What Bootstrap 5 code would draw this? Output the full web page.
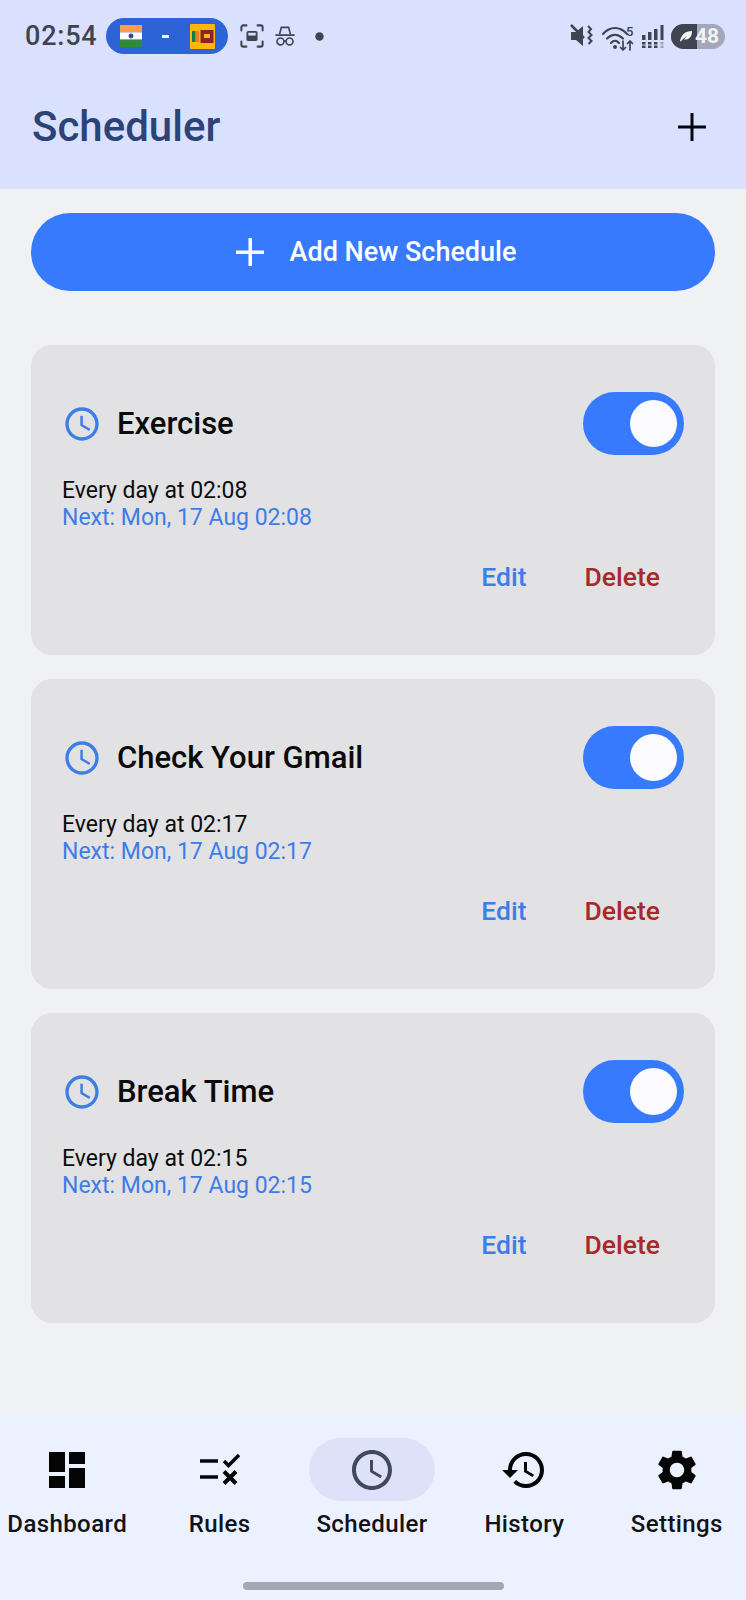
<!DOCTYPE html>
<html lang="en">
<head>
  <meta charset="UTF-8">
  <meta name="viewport" content="width=device-width, initial-scale=1">
  <title>Scheduler</title>
  <link href="https://cdn.jsdelivr.net/npm/bootstrap@5.3.0/dist/css/bootstrap.min.css" rel="stylesheet">
  <style>
    html, body { height: 100%; }
    body { font-family: Roboto, "Liberation Sans", sans-serif; background: #f0f1f3; overflow: hidden; }
    .app-shell { width: 746px; height: 1600px; }
    .top-area { background: #d9e1ff; height: 189px; }
    .status-row { height: 72px; padding: 0 21px 0 25px; color: #3f4451; }
    .status-time { font-size: 27px; font-weight: 500; line-height: 1; letter-spacing: .8px; }
    .score-pill { width: 122px; height: 36px; background: #2c63d6; border-radius: 18px; margin-left: 8px; padding: 0 13px 0 14px; }
    .score-dash { width: 7px; height: 3px; background: #f3f6ff; }
    .st-shot { margin-left: 12px; }
    .st-hat { margin-left: 11px; }
    .st-dot { margin-left: 20px; }
    .st-gap { margin-left: 7px; }
    .title-row { padding: 0 40px 0 32px; height: 110px; }
    .page-title { font-size: 42px; font-weight: 500; color: #2d4375; margin: 0; line-height: 1; }
    .add-pill { background: #387afe; color: #fff; height: 78px; border-radius: 39px; font-size: 27px; font-weight: 500; border: 0; margin: 24px 31px 0; width: 684px; padding-left: 18px; }
    .add-pill:hover, .add-pill:active { background: #387afe !important; color: #fff !important; }
    .add-plus { margin-right: 26px; }
    .sched-list { margin: 54px 31px 0; gap: 24px; }
    .sched-item { background: #e2e2e5; border-radius: 21px; height: 310px; padding: 47px 31px 0 31px; }
    .sched-name { font-size: 31px; font-weight: 500; color: #0a0a0a; margin: 0 0 0 15px; line-height: 60px; }
    .sched-when { font-size: 23px; line-height: 26px; color: #0c0c0c; margin-top: 23px; }
    .sched-next { font-size: 23px; line-height: 27px; color: #3d7de6; }
    .toggle-track { width: 101px; height: 63px; border-radius: 32px; background: #387afe; padding: 8px 7px; }
    .toggle-knob { width: 47px; height: 47px; border-radius: 50%; background: #fbfbff; }
    .act-row { margin-top: 31px; padding-right: 24px; gap: 58px; }
    .act-link { font-size: 26.5px; font-weight: 500; line-height: 30px; text-decoration: none; }
    .act-edit { color: #3d7de6; }
    .act-del { color: #a8292a; }
    .tab-bar { background: #ecf1ff; height: 186px; }
    .tab-row { margin: 24px -7px 0 -9px; }
    .tab-col { flex: 1 1 0; min-width: 0; }
    .tab-pill { width: 126px; height: 63px; border-radius: 32px; }
    .tab-pill.is-on { background: #dde2f9; }
    .tab-label { font-size: 24px; font-weight: 500; letter-spacing: .4px; color: #111318; line-height: 28px; margin-top: 9px; white-space: nowrap; }
    .home-bar { width: 261px; height: 8px; border-radius: 4px; background: #a3a7b2; margin: 44px auto 0; }
    .batt { width: 54px; height: 25px; border-radius: 13px; background: #a3a8b9; color: #f1f2f6; font-size: 21px; font-weight: 700; line-height: 25px; overflow: hidden; }
    .batt-fill { width: 26px; height: 25px; background: #3f4451; }
    .batt-num { margin-left: -2px; }
  </style>
</head>
<body>
  <div class="app-shell d-flex flex-column">

    <!-- Header -->
    <div class="top-area">
      <div class="status-row d-flex align-items-center">
        <span class="status-time">02:54</span>
        <div class="score-pill d-flex align-items-center justify-content-between">
          <svg width="22" height="22" viewBox="0 0 23 23"><rect width="23" height="7.700" fill="#ff9d47"/><rect y="7.700" width="23" height="7.600" fill="#fff"/><rect y="15.300" width="23" height="7.700" fill="#2f8a3b"/><circle cx="11.500" cy="11.500" r="2.600" fill="#3a4a9a"/></svg>
          <span class="score-dash"></span>
          <svg width="25" height="25" viewBox="0 0 25 25"><rect width="25" height="25" rx="1" fill="#ffb70a"/><rect x="2" y="7" width="3.500" height="11" fill="#0f7a4a"/><rect x="5.500" y="7" width="3.500" height="11" fill="#f07c1c"/><rect x="10.500" y="6" width="13" height="13" fill="#8c2229"/><rect x="14" y="10" width="6" height="4" fill="#ffb70a"/></svg>
        </div>
        <svg class="st-shot" width="24" height="24" viewBox="0 0 26 26" fill="none" stroke="#3f4451" stroke-width="2.200" stroke-linecap="round"><path d="M1.500 7V3.500a2 2 0 0 1 2-2H7M19 1.500h3.500a2 2 0 0 1 2 2V7M24.500 19v3.500a2 2 0 0 1-2 2H19M7 24.500H3.500a2 2 0 0 1-2-2V19"/><rect x="7" y="7.500" width="12" height="11" rx="2" fill="#3f4451" stroke="none"/><rect x="9" y="9.500" width="8" height="3" fill="#d9e1ff" stroke="none"/></svg>
        <svg class="st-hat" width="20" height="20" viewBox="0 0 22 22" fill="none" stroke="#3f4451" stroke-width="1.800"><path d="M5 9 7 1.500h8l2 7.500"/><path d="M1 10h20" stroke-linecap="round"/><circle cx="6" cy="17" r="3.800"/><circle cx="16" cy="17" r="3.800"/><path d="M9.800 16.500h2.400"/></svg>
        <svg class="st-dot" width="9" height="9" viewBox="0 0 9 9"><circle cx="4.500" cy="4.500" r="4.200" fill="#3f4451"/></svg>
        <div class="ms-auto d-flex align-items-center">
          <svg width="25" height="24" viewBox="0 0 25 24" fill="#3f4451"><path d="M1 8h5l7-6v20l-7-6H1z"/><path d="M1 1l13 13" stroke="#3f4451" stroke-width="2.500"/><path d="M18 2l3 3-2.500 3 3 3-3 3 3 3-3 3" fill="none" stroke="#3f4451" stroke-width="2"/></svg>
          <svg class="st-gap" width="33" height="29" viewBox="0 -4 33 29" fill="none" stroke="#3f4451" stroke-width="2.200" stroke-linecap="round"><path d="M1 8c7-8 17-8 24 0"/><path d="M5 12.500c5-5 11-5 16 0"/><path d="M9 17c3-3 5-3 8 0"/><circle cx="13" cy="21" r="2" fill="#3f4451" stroke="none"/><path d="M21 15v9m-2.500-2.500 2.500 2.500 2.500-2.500M28 24v-9m-2.500 2.500L28 15l2.500 2.500" stroke-width="1.700"/><text x="24" y="10" font-size="13" font-weight="500" font-family="Roboto" fill="#3f4451" stroke="none">5</text></svg>
          <svg class="st-gap" width="22" height="23" viewBox="0 0 22 23" fill="#3f4451"><rect x="0" y="10" width="3.500" height="5"/><rect x="6" y="7" width="3.500" height="8"/><rect x="12" y="4" width="3.500" height="11"/><rect x="18.500" y="0" width="3" height="15"/><rect y="17" width="3.500" height="2.500"/><rect x="6" y="17" width="3.500" height="2.500"/><rect x="12" y="17" width="3.500" height="2.500"/><rect x="18.500" y="17" width="3" height="2.500" opacity=".4"/><rect y="20.500" width="3.500" height="2.500"/><rect x="6" y="20.500" width="3.500" height="2.500"/><rect x="12" y="20.500" width="3.500" height="2.500"/><rect x="18.500" y="20.500" width="3" height="2.500" opacity=".4"/></svg>
          <div class="batt d-flex st-gap">
            <div class="batt-fill d-flex align-items-center justify-content-center">
              <svg class="ms-1" width="14" height="12" viewBox="0 0 14 12" fill="#f1f2f6"><path d="M1 11C2 5 6 1 13 1c0 6-3 9-8 8.500l3-4-4.500 4L2 11.500z"/></svg>
            </div>
            <span class="batt-num">48</span>
          </div>
        </div>
      </div>
      <div class="title-row d-flex align-items-center justify-content-between">
        <h1 class="page-title">Scheduler</h1>
        <svg width="28" height="28" viewBox="0 0 28 28" fill="#05070d"><rect x="12.500" width="3" height="28"/><rect y="12.500" width="28" height="3"/></svg>
      </div>
    </div>

    <!-- Add button -->
    <button class="btn add-pill d-flex align-items-center justify-content-center" type="button">
      <svg class="add-plus" width="28" height="28" viewBox="0 0 28 28" fill="#fff"><rect x="12.500" width="3.500" height="28"/><rect y="12.500" width="28" height="3.500"/></svg>
      Add New Schedule
    </button>

    <!-- Schedule cards -->
    <div class="sched-list d-flex flex-column">
      <div class="sched-item">
        <div class="d-flex align-items-center justify-content-between">
          <div class="d-flex align-items-center">
            <svg width="40" height="40" viewBox="0 0 24 24" fill="#3d7de6"><path d="M11.990 2C6.470 2 2 6.480 2 12s4.470 10 9.990 10C17.520 22 22 17.520 22 12S17.520 2 11.990 2zM12 20c-4.420 0-8-3.580-8-8s3.580-8 8-8 8 3.580 8 8-3.580 8-8 8zm.5-13H11v6l5.250 3.150.75-1.230-4.500-2.670z"/></svg>
            <h2 class="sched-name">Exercise</h2>
          </div>
          <div class="toggle-track d-flex justify-content-end"><span class="toggle-knob"></span></div>
        </div>
        <div class="sched-when">Every day at 02:08</div>
        <div class="sched-next">Next: Mon, 17 Aug 02:08</div>
        <div class="act-row d-flex justify-content-end">
          <a class="act-link act-edit" href="#">Edit</a>
          <a class="act-link act-del" href="#">Delete</a>
        </div>
      </div>
      <div class="sched-item">
        <div class="d-flex align-items-center justify-content-between">
          <div class="d-flex align-items-center">
            <svg width="40" height="40" viewBox="0 0 24 24" fill="#3d7de6"><path d="M11.990 2C6.470 2 2 6.480 2 12s4.470 10 9.990 10C17.520 22 22 17.520 22 12S17.520 2 11.990 2zM12 20c-4.420 0-8-3.580-8-8s3.580-8 8-8 8 3.580 8 8-3.580 8-8 8zm.5-13H11v6l5.250 3.150.75-1.230-4.500-2.670z"/></svg>
            <h2 class="sched-name">Check Your Gmail</h2>
          </div>
          <div class="toggle-track d-flex justify-content-end"><span class="toggle-knob"></span></div>
        </div>
        <div class="sched-when">Every day at 02:17</div>
        <div class="sched-next">Next: Mon, 17 Aug 02:17</div>
        <div class="act-row d-flex justify-content-end">
          <a class="act-link act-edit" href="#">Edit</a>
          <a class="act-link act-del" href="#">Delete</a>
        </div>
      </div>
      <div class="sched-item">
        <div class="d-flex align-items-center justify-content-between">
          <div class="d-flex align-items-center">
            <svg width="40" height="40" viewBox="0 0 24 24" fill="#3d7de6"><path d="M11.990 2C6.470 2 2 6.480 2 12s4.470 10 9.990 10C17.520 22 22 17.520 22 12S17.520 2 11.990 2zM12 20c-4.420 0-8-3.580-8-8s3.580-8 8-8 8 3.580 8 8-3.580 8-8 8zm.5-13H11v6l5.250 3.150.75-1.230-4.500-2.670z"/></svg>
            <h2 class="sched-name">Break Time</h2>
          </div>
          <div class="toggle-track d-flex justify-content-end"><span class="toggle-knob"></span></div>
        </div>
        <div class="sched-when">Every day at 02:15</div>
        <div class="sched-next">Next: Mon, 17 Aug 02:15</div>
        <div class="act-row d-flex justify-content-end">
          <a class="act-link act-edit" href="#">Edit</a>
          <a class="act-link act-del" href="#">Delete</a>
        </div>
      </div>
    </div>

    <!-- Bottom nav -->
    <nav class="tab-bar mt-auto">
      <div class="tab-row d-flex">
        <div class="tab-col d-flex flex-column align-items-center">
          <div class="tab-pill d-flex align-items-center justify-content-center">
            <svg width="48" height="48" viewBox="0 0 24 24" fill="#050505"><path d="M3 13h8V3H3v10zm0 8h8v-6H3v6zm10 0h8V11h-8v10zm0-18v6h8V3h-8z"/></svg>
          </div>
          <div class="tab-label">Dashboard</div>
        </div>
        <div class="tab-col d-flex flex-column align-items-center">
          <div class="tab-pill d-flex align-items-center justify-content-center">
            <svg width="40" height="32" viewBox="0 0 40 32" fill="none" stroke="#050505" stroke-width="3.400"><path d="M0 7h18M0 23h18"/><path d="M24 7l4.500 4.500L39 1"/><path d="M24 17.500l12 12M36 17.500l-12 12" stroke-width="4"/></svg>
          </div>
          <div class="tab-label">Rules</div>
        </div>
        <div class="tab-col d-flex flex-column align-items-center">
          <div class="tab-pill is-on d-flex align-items-center justify-content-center">
            <svg width="48" height="48" viewBox="0 0 24 24" fill="#42495c"><path d="M11.990 2C6.470 2 2 6.480 2 12s4.470 10 9.990 10C17.520 22 22 17.520 22 12S17.520 2 11.990 2zM12 20c-4.420 0-8-3.580-8-8s3.580-8 8-8 8 3.580 8 8-3.580 8-8 8zm.5-13H11v6l5.250 3.150.75-1.230-4.500-2.670z"/></svg>
          </div>
          <div class="tab-label">Scheduler</div>
        </div>
        <div class="tab-col d-flex flex-column align-items-center">
          <div class="tab-pill d-flex align-items-center justify-content-center">
            <svg width="48" height="48" viewBox="0 0 24 24" fill="#050505"><path d="M13 3c-4.970 0-9 4.030-9 9H1l3.890 3.890.07.140L9 12H6c0-3.870 3.130-7 7-7s7 3.130 7 7-3.130 7-7 7c-1.930 0-3.680-.790-4.940-2.060l-1.420 1.420C8.270 19.990 10.510 21 13 21c4.970 0 9-4.030 9-9s-4.030-9-9-9zm-1 5v5l4.280 2.540.720-1.210-3.500-2.080V8H12z"/></svg>
          </div>
          <div class="tab-label">History</div>
        </div>
        <div class="tab-col d-flex flex-column align-items-center">
          <div class="tab-pill d-flex align-items-center justify-content-center">
            <svg width="48" height="48" viewBox="0 0 24 24" fill="#050505"><path d="M19.140 12.940c.040-.300.060-.610.060-.940 0-.320-.020-.640-.070-.940l2.030-1.580c.180-.140.230-.410.120-.610l-1.920-3.320c-.120-.220-.370-.290-.590-.220l-2.390.960c-.500-.380-1.030-.700-1.620-.940l-.360-2.540c-.040-.240-.240-.410-.480-.410h-3.840c-.240 0-.430.170-.470.410l-.360 2.540c-.590.240-1.130.570-1.620.940l-2.390-.960c-.220-.080-.470 0-.590.220L2.740 8.870c-.120.210-.080.470.120.610l2.030 1.580c-.050.300-.090.630-.090.940s.020.640.070.940l-2.030 1.580c-.180.140-.230.410-.12.610l1.920 3.320c.120.220.370.290.590.220l2.390-.960c.500.380 1.030.700 1.620.940l.360 2.540c.050.240.240.410.480.410h3.840c.240 0 .440-.170.470-.410l.360-2.540c.590-.240 1.130-.560 1.620-.940l2.390.960c.220.080.470 0 .590-.220l1.920-3.320c.120-.220.070-.470-.120-.610l-2.010-1.580zM12 15.600c-1.980 0-3.600-1.620-3.600-3.600s1.620-3.600 3.600-3.600 3.600 1.620 3.600 3.600-1.620 3.600-3.600 3.600z"/></svg>
          </div>
          <div class="tab-label">Settings</div>
        </div>
      </div>
      <div class="home-bar"></div>
    </nav>
  </div>

  <script src="https://cdn.jsdelivr.net/npm/bootstrap@5.3.0/dist/js/bootstrap.bundle.min.js"></script>
</body>
</html>
